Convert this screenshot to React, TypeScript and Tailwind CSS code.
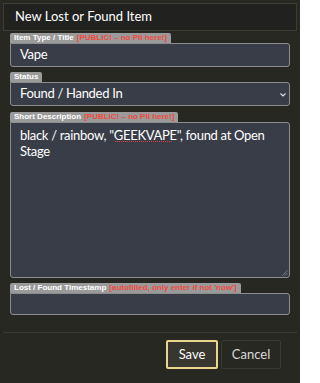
import React from "react";

const font = { fontFamily: 'Lato, "Liberation Sans", sans-serif' };
const labelFont = { fontFamily: '"Liberation Sans", Arial, sans-serif' };

function Label({ title, note }: { title: string; note?: string }) {
  return (
    <div className="flex" style={labelFont}>
      <div className="h-[10px] bg-[#9a9a9a] rounded-t-[2px] px-[4px] flex items-center text-[8px] leading-none font-bold text-white whitespace-nowrap">
        <span>{title}</span>
        {note && <span className="ml-[3px] text-[#f04a3e]">{note}</span>}
      </div>
    </div>
  );
}

export default function App() {
  return (
    <div className="w-[300px] h-[383px] overflow-hidden bg-[#282822] p-[3px] flex flex-col" style={font}>
      <div className="h-[28px] bg-[#212120] border border-[#3c3c36] flex items-center px-[11px] text-[13px] text-white">
        New Lost or Found Item
      </div>
      <div className="px-[7px] pt-[2px] flex flex-col">
        <Label title="Item Type / Title" note="[PUBLIC! – no PII here!]" />
        <div className="h-[24px] bg-[#393d47] border border-[#8c8c8c] rounded-[3px] rounded-tl-none flex items-center px-[9px] text-[13px] tracking-[-0.3px] text-white">
          Vape
        </div>
        <div className="mt-[5px]">
          <Label title="Status" />
        </div>
        <div className="h-[24px] bg-[#393d47] border border-[#8c8c8c] rounded-[3px] rounded-tl-none flex items-center pl-[9px] pr-[3px] text-[13px] tracking-[-0.3px] text-white">
          <span className="flex-1">Found / Handed In</span>
          <svg width="6" height="4" viewBox="0 0 6 4" className="mt-[2px]">
            <path d="M0.5 0.5 L3 3 L5.5 0.5" stroke="#ddd" strokeWidth="1.2" fill="none" />
          </svg>
        </div>
        <div className="mt-[6px]">
          <Label title="Short Description" note="[PUBLIC! – no PII here!]" />
        </div>
        <div className="relative h-[156px] bg-[#393d47] border border-[#8c8c8c] rounded-[3px] rounded-tl-none px-[9px] pt-[4px] text-[13px] leading-[16px] tracking-[-0.3px] text-white">
          <p>black / rainbow, "GEEKVAPE", found at Open Stage</p>
          <div className="absolute left-[104px] top-[18px] w-[57px] border-b border-dotted border-[#e04040]" />
          <svg width="6" height="6" viewBox="0 0 6 6" className="absolute right-[1px] bottom-[1px]">
            <path d="M5.5 0.5 L0.5 5.5 M5.5 3 L3 5.5" stroke="#888" strokeWidth="0.8" />
          </svg>
        </div>
        <div className="mt-[5px]">
          <Label title="Lost / Found Timestamp" note="[autofilled, only enter if not 'now']" />
        </div>
        <div className="h-[22px] bg-[#393d47] border border-[#8c8c8c] rounded-[3px] rounded-tl-none" />
      </div>
      <div className="mt-[17px] h-px bg-[#3a3a34]" />
      <div className="flex justify-end gap-[3px] pr-[16px] pt-[7px]">
        <button className="w-[52px] h-[29px] bg-[#37372f] border-2 border-[#e9d68f] rounded-[2px] text-[13px] text-white">
          Save
        </button>
        <button className="w-[60px] h-[29px] bg-[#282822] border border-[#3a3a34] rounded-[2px] text-[13px] text-[#d8d8d8]">
          Cancel
        </button>
      </div>
    </div>
  );
}
